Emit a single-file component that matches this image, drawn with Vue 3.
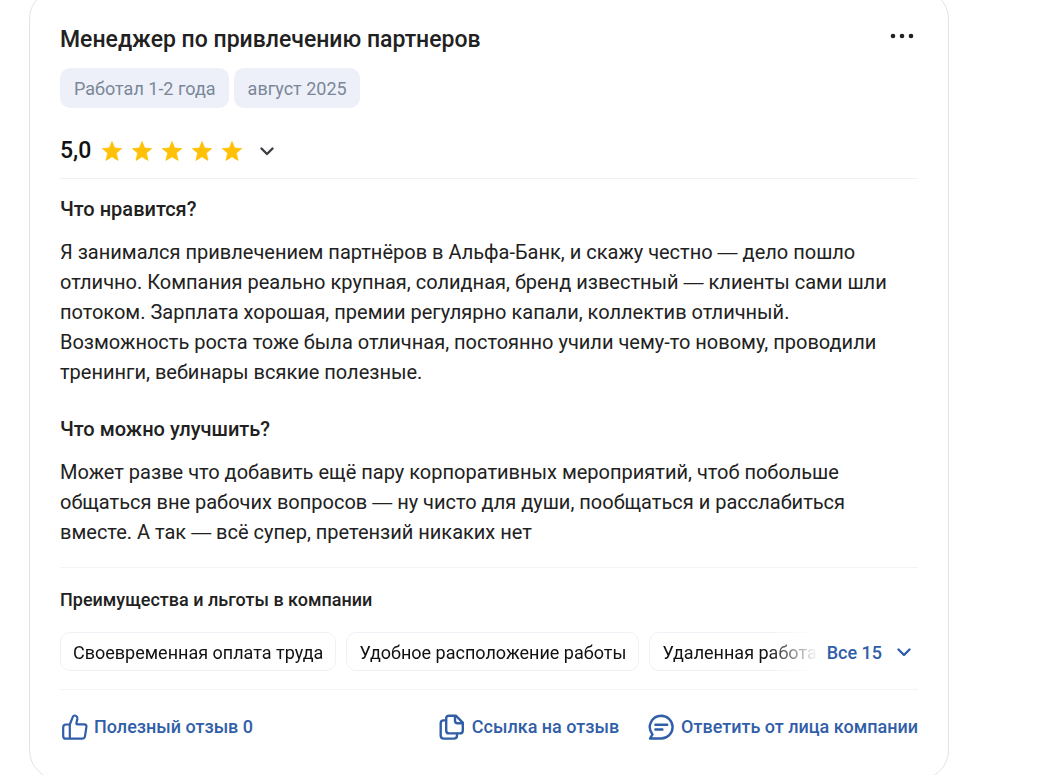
<script setup>
const tags = ['Работал 1-2 года', 'август 2025']
const sections = [
  {
    title: 'Что нравится?',
    text: 'Я занимался привлечением партнёров в Альфа-Банк, и скажу честно — дело пошло отлично. Компания реально крупная, солидная, бренд известный — клиенты сами шли потоком. Зарплата хорошая, премии регулярно капали, коллектив отличный. Возможность роста тоже была отличная, постоянно учили чему-то новому, проводили тренинги, вебинары всякие полезные.'
  },
  {
    title: 'Что можно улучшить?',
    text: 'Может разве что добавить ещё пару корпоративных мероприятий, чтоб побольше общаться вне рабочих вопросов — ну чисто для души, пообщаться и расслабиться вместе. А так — всё супер, претензий никаких нет'
  }
]
const benefits = ['Своевременная оплата труда', 'Удобное расположение работы', 'Удаленная работа']

// Splits a text so that its dashes can be set in a wider face
const parts = (text) => text.split(/(—)/)
</script>

<template>
  <main class="page">
    <article class="card">
      <header class="head">
        <h2 class="title">Менеджер по привлечению партнеров</h2>
        <button class="more" type="button" aria-label="Ещё">
          <svg width="24" height="6" viewBox="0 0 24 6" fill="currentColor">
            <circle cx="3" cy="3" r="2.3" /><circle cx="12" cy="3" r="2.3" /><circle cx="21" cy="3" r="2.3" />
          </svg>
        </button>
      </header>

      <div class="tags">
        <span v-for="tag in tags" :key="tag" class="tag">{{ tag }}</span>
      </div>

      <div class="rating">
        <span class="score">5,0</span>
        <span class="stars">
          <svg v-for="n in 5" :key="n" width="20" height="20" viewBox="0 0 20 20" fill="#ffc107" stroke="#ffc107" stroke-width="0.8" stroke-linejoin="round">
            <path d="M10 0.6 12.6 7 19.6 7.6 14.3 12.1 16 19.4 10 15.7 4 19.4 5.7 12.1 0.4 7.6 7.4 7Z" />
          </svg>
        </span>
        <button class="expand" type="button" aria-label="Показать оценки">
          <svg width="14" height="9" viewBox="0 0 14 9" fill="none" stroke="currentColor" stroke-width="2.4" stroke-linecap="round" stroke-linejoin="round">
            <path d="M1.5 1.5 7 7 12.5 1.5" />
          </svg>
        </button>
      </div>

      <div class="review">
        <section v-for="s in sections" :key="s.title" class="section">
          <h3 class="subtitle">{{ s.title }}</h3>
          <p class="text"><span v-for="(part, i) in parts(s.text)" :key="i" :class="{ dash: part === '—' }">{{ part }}</span></p>
        </section>
      </div>

      <section class="benefits">
        <h4 class="benefits-title">Преимущества и льготы в компании</h4>
        <div class="benefits-row">
          <ul class="chips">
            <li v-for="b in benefits" :key="b" class="chip">{{ b }}</li>
          </ul>
          <button class="all" type="button">
            Все 15
            <svg width="14" height="9" viewBox="0 0 14 9" fill="none" stroke="currentColor" stroke-width="2.4" stroke-linecap="round" stroke-linejoin="round">
              <path d="M1.5 1.5 7 7 12.5 1.5" />
            </svg>
          </button>
        </div>
      </section>

      <footer class="actions">
        <button class="action useful" type="button">
          <svg width="28" height="28" viewBox="0 0 28 28" fill="none" stroke="currentColor" stroke-width="2.2" stroke-linejoin="round" stroke-linecap="round">
            <path d="M9.8 11.5 12.7 4.1C13.1 3.1 13.7 2.5 14.7 2.5 16.6 2.5 17.6 4.2 17.3 6L16.4 10.2Q16.2 11.4 17.4 11.4H24.2Q26.8 11.4 26.4 14L25 23.2Q24.6 25.7 22.2 25.7H6Q3.2 25.7 3.2 22.9V14.4Q3.2 11.5 6 11.5H9.8V25.7" />
          </svg>
          Полезный отзыв 0
        </button>
        <button class="action" type="button">
          <svg width="28" height="28" viewBox="0 0 28 28" fill="none" stroke="currentColor" stroke-width="2.4" stroke-linejoin="round" stroke-linecap="round">
            <path d="M11.2 2.7H17.8L24.8 9.7V17.4Q24.8 20.4 21.8 20.4H11.2Q8.2 20.4 8.2 17.4V5.7Q8.2 2.7 11.2 2.7Z" />
            <path d="M17 3.2V7.7Q17 10.2 19.5 10.2H24.4M8 7.4H5.6Q2.7 7.4 2.7 10.4V22.4Q2.7 25.6 5.9 25.6H15.8Q19 25.6 19 22.4V20.8" />
          </svg>
          Ссылка на отзыв
        </button>
        <button class="action" type="button">
          <svg width="28" height="28" viewBox="0 0 28 28" fill="none" stroke="currentColor" stroke-width="2.4" stroke-linejoin="round" stroke-linecap="round">
            <path d="M14.2 2.7A11.4 11.4 0 0 1 14.2 25.5H3L5.5 21.4A11.4 11.4 0 0 1 14.2 2.7Z" />
            <path d="M8.4 11.7H20.2M8.4 16.5H15.4" />
          </svg>
          Ответить от лица компании
        </button>
      </footer>
    </article>
  </main>
</template>

<style>
html {
  overflow: hidden;
  background: #fff;
}
</style>

<style scoped>
.page {
  padding: 0 113px 0 29px;
  font-family: Roboto, "Noto Sans", sans-serif;
  color: #212121;
}
.card {
  margin-top: -11px;
  padding: 35px 30px 37px;
  border: 1px solid #dfe4ec;
  border-radius: 30px;
}
h2, h3, h4, p, ul {
  margin: 0;
  padding: 0;
}
button {
  display: inline-flex;
  align-items: center;
  margin: 0;
  padding: 0;
  border: 0;
  background: none;
  font: inherit;
  color: inherit;
  cursor: pointer;
}
svg {
  display: block;
  flex: none;
}
.head {
  display: flex;
  justify-content: space-between;
  align-items: flex-start;
}
.title {
  font-size: 23px;
  line-height: 30px;
  font-weight: 500;
}
.more {
  height: 22px;
  padding-right: 4px;
}
.tags {
  display: flex;
  gap: 5px;
  margin-top: 13px;
}
.tag {
  padding: 2px 13px 0 14px;
  border-radius: 10px;
  background: #edf0f8;
  color: #7a8799;
  font-size: 18px;
  line-height: 38px;
}
.rating {
  display: flex;
  align-items: center;
  margin-top: 28px;
  padding-bottom: 12px;
  border-bottom: 1px solid #f0f1f7;
}
.score {
  font-size: 23px;
  line-height: 30px;
  font-weight: 500;
  color: #111;
}
.stars {
  display: flex;
  gap: 10px;
  margin-left: 11px;
}
.expand {
  margin-left: 18px;
  color: #3c3f44;
}
.review {
  padding: 15px 0 20px;
  border-bottom: 1px solid #f3f4f7;
}
.section + .section {
  margin-top: 27px;
}
.subtitle {
  font-size: 20px;
  line-height: 30px;
  font-weight: 500;
}
.text {
  margin-top: 13px;
  padding-right: 12px;
  font-size: 20px;
  line-height: 30px;
}
.dash {
  font-family: "Liberation Sans", sans-serif;
  line-height: 1;
}
.benefits {
  padding: 17px 0 18px;
  border-bottom: 1px solid #f3f4f7;
}
.benefits-title {
  font-size: 18px;
  line-height: 30px;
  font-weight: 500;
}
.benefits-row {
  display: flex;
  align-items: center;
  margin-top: 17px;
}
.chips {
  display: flex;
  flex: 1;
  min-width: 0;
  gap: 10px;
  overflow: hidden;
  list-style: none;
  color: #111;
  mask-image: linear-gradient(to right, #000 calc(100% - 50px), transparent);
}
.chip {
  flex: none;
  padding: 3px 12px 0;
  border: 1px solid #f0f1f7;
  border-radius: 10px;
  font-size: 18px;
  line-height: 34px;
}
.all {
  gap: 15px;
  padding: 2px 7px 0 9px;
  color: #315ea8;
  font-size: 18px;
  font-weight: 500;
}
.actions {
  display: flex;
  gap: 28px;
  padding-top: 22px;
}
.action {
  gap: 6px;
  color: #315ea8;
  font-size: 18px;
  line-height: 30px;
  font-weight: 500;
  white-space: nowrap;
}
.useful {
  margin-right: auto;
}
</style>
